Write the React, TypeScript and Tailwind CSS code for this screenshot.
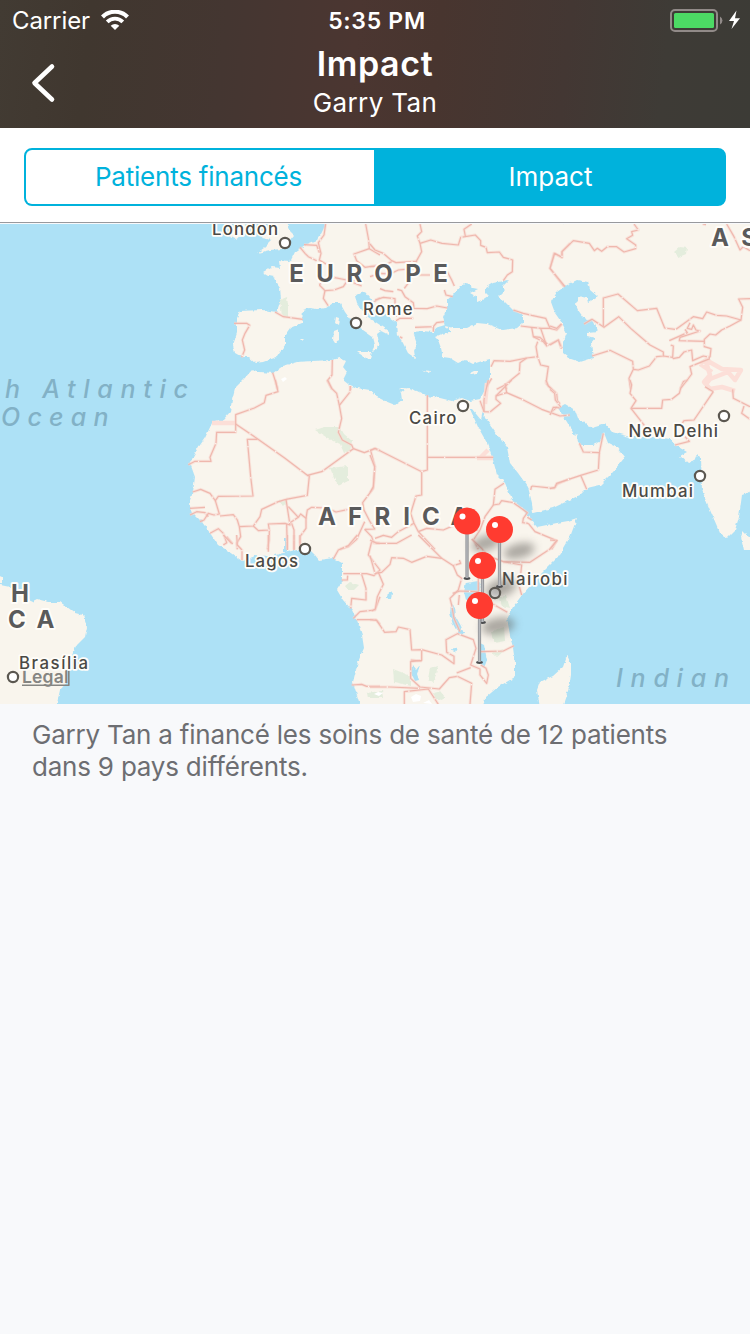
import React from "react";

const LAND =
  "M327 222 L323 230 L320 236 L317 240 L305 245 L295 252 L291 260 L288 262 L279 261 L280 268 L272 267 L263 272 L268 275 L273 276 L275 280 L280 287 L281 300 L277 312 L262 310 L240 311 L237 317 L237 333 L233 345 L235 353 L242 357 L248 357 L255 363 L263 362 L277 357 L285 345 L285 335 L290 328 L302 323 L303 310 L309 308 L317 309 L326 308 L333 303 L340 303 L345 312 L353 323 L363 330 L373 337 L375 345 L372 351 L376 350 L379 344 L377 334 L381 331 L389 335 L389 331 L380 325 L368 317 L362 310 L357 303 L355 295 L365 292 L370 298 L380 310 L390 318 L397 323 L398 335 L403 343 L408 353 L415 358 L414 350 L417 343 L413 332 L422 331 L433 332 L435 328 L445 325 L446 332 L435 337 L438 340 L441 348 L443 357 L450 358 L458 363 L465 360 L473 364 L482 361 L490 359 L490 377 L486 388 L480 399 L470 401 L462 398 L452 401 L440 398 L427 396 L417 391 L408 388 L401 393 L402 400 L395 405 L385 401 L375 396 L370 390 L357 388 L348 384 L343 380 L347 372 L343 367 L346 361 L340 358 L332 360 L313 361 L297 362 L283 366 L273 373 L260 372 L252 370 L243 380 L235 388 L232 400 L230 412 L223 420 L212 423 L205 438 L198 448 L190 463 L195 477 L193 492 L189 503 L193 513 L202 522 L210 533 L218 545 L225 549 L242 561 L254 556 L268 557 L283 553 L297 550 L310 550 L315 555 L319 560 L333 558 L342 563 L342 582 L337 590 L343 600 L352 610 L357 620 L362 635 L364 648 L358 662 L353 682 L357 695 L361 708 L483 708 L485 698 L498 687 L515 677 L515 662 L513 648 L510 635 L507 618 L513 607 L522 595 L537 578 L557 558 L563 549 L570 537 L577 518 L568 521 L557 523 L537 527 L530 519 L522 508 L512 500 L505 483 L497 475 L493 460 L487 443 L478 427 L470 409 L472 409 L481 420 L483 410 L485 418 L497 435 L507 447 L510 463 L518 473 L528 487 L532 503 L533 513 L553 508 L580 495 L587 488 L600 485 L613 472 L625 457 L618 448 L608 443 L604 433 L600 442 L593 445 L581 445 L578 443 L577 434 L575 436 L567 422 L558 408 L565 404 L575 410 L578 418 L592 428 L605 424 L612 432 L630 437 L653 437 L670 439 L675 445 L687 452 L680 456 L688 463 L694 461 L697 454 L701 458 L702 490 L710 510 L720 533 L727 538 L735 530 L739 517 L742 495 L755 490 L755 218 Z";

const ISLANDS = [
  "M257 253 L264 248 L272 240 L262 238 L266 231 L274 222 L286 222 L289 230 L294 235 L289 241 L290 245 L282 249 L270 250 Z",
  "M230 237 L236 240 L243 235 L246 222 L238 222 Z",
  "M336 317 L339 318 L338 325 L335 323 Z M334 331 L339 329 L339 340 L335 343 L333 340 Z",
  "M357 352 L372 352 L370 359 L366 358 Z",
  "M300 339 L304 339 L302 341 Z M422 370 L431 371 L430 373 Z",
  "M470 373 L474 371 L479 371 L476 374 L472 375 Z",
  "M398 388 L404 388 L411 389 L406 391 Z",
  "M567 655 L571 664 L571 675 L569 688 L562 708 L540 708 L537 690 L540 682 L553 676 L563 667 Z",
  "M741 537 L743 531 L748 536 L752 542 L752 550 L744 550 Z",
  "M-5 584 L10 587 L27 595 L31 602 L37 599 L48 602 L60 602 L67 607 L75 613 L83 615 L87 627 L85 637 L77 645 L72 655 L68 670 L68 681 L60 690 L56 708 L-5 708 Z",
  "M-5 574 L2 577 L2 583 L-5 584 Z",
];

const SEAS = [
  "M467 283 L473 288 L478 289 L470 293 L477 297 L477 302 L482 300 L488 296 L485 293 L485 288 L493 283 L503 281 L509 280 L502 287 L505 290 L498 297 L503 300 L513 310 L523 315 L523 323 L517 328 L503 330 L487 324 L477 323 L467 328 L453 328 L445 326 L443 317 L447 308 L447 300 L453 295 L460 286 Z",
  "M438 330 L448 328 L452 332 L442 335 Z",
  "M577 280 L588 282 L590 290 L598 297 L588 303 L587 298 L578 296 L578 302 L575 303 L578 310 L583 317 L588 320 L593 319 L598 332 L587 333 L587 336 L595 338 L591 343 L593 358 L580 362 L571 359 L563 353 L563 343 L567 333 L562 323 L555 313 L551 302 L557 292 L567 285 Z",
  "M466 583 L478 581 L481 588 L478 598 L466 600 L464 592 Z",
  "M451 603 L455 607 L456 617 L461 626 L464 634 L459 635 L453 624 L450 613 Z",
  "M478 642 L484 645 L487 660 L484 668 L480 662 Z",
  "M412 665 L416 670 L420 665 L417 674 L419 680 L415 681 L411 673 Z M454 647 L457 648 L455 652 L452 651 Z M388 592 L392 593 L391 599 L387 598 Z",
  "M562 223 L568 223 L565 225 Z M284 538 L287 538 L287 552 L284 552 Z",
];

const PARKS = [
  "M674 252 L680 247 L687 248 L686 254 L679 257 Z",
  "M315 430 L325 427 L340 427 L344 434 L352 441 L350 452 L344 453 L340 444 L326 437 Z",
  "M330 468 L348 466 L348 481 L338 486 Z",
  "M277 502 L286 499 L287 505 L280 504 Z",
  "M345 586 L350 582 L359 585 L354 590 L348 590 Z",
  "M498 597 L506 596 L510 608 L502 606 Z",
  "M491 632 L504 627 L505 641 L494 643 Z M492 652 L505 650 L497 657 Z",
  "M430 668 L438 665 L436 675 L433 682 L428 679 Z",
  "M393 669 L411 676 L411 686 L394 682 Z",
  "M433 693 L440 691 L445 697 L438 701 Z M367 693 L382 691 L383 698 L368 698 Z",
  "M280 300 L287 297 L288 307 L288 318 L282 316 Z",
];

interface BorderSet {
  x: number;
  y: number;
  lines: string[];
}

const BORDERS: BorderSet[] = [
  {
    x: 180,
    y: 220,
    lines: [
      "285 276 310 290 368 298",
      "162 310 200 310 209 316 195 340 187 360 194 390 185 412",
      "437 12 432 45 415 68 423 100 418 120 438 132",
      "360 82 375 100 385 110 410 122",
      "372 74 410 76 418 98",
      "557 12 566 60 568 86 600 105",
      "568 86 522 102 530 122 555 142 600 135",
      "418 195 430 180 460 172 500 180 545 198",
      "418 195 435 212 462 210 490 200 498 188 530 180",
      "435 212 430 235 445 258",
      "583 245 600 233",
      "457 420 456 465 442 482 456 508",
      "278 458 285 480 293 508",
      "511 498 512 510",
    ],
  },
  {
    x: 370,
    y: 220,
    lines: [
      "150 12 155 35 142 48 150 70 155 95 140 122 138 132",
      "150 70 182 60 216 70 265 75 272 52 316 45 332 62 332 76 348 82 352 98 388 96 400 112 428 120 427 155 412 165 400 182",
      "305 12 282 28 286 48",
      "0 72 15 90 40 100 65 122 78 128 138 124",
      "0 140 40 138 65 125",
      "60 162 85 150 135 145",
      "103 205 118 185 128 165 180 165",
      "82 208 95 212 105 230 130 248 132 265 172 266 200 258 232 264",
      "0 170 30 160 60 162",
      "232 155 245 180 253 198",
      "223 210 228 225 248 230",
      "135 322 190 320 200 308 222 305",
      "190 320 190 335",
      "78 302 90 295 130 295",
      "15 240 40 232 75 236 75 250 80 290",
      "30 206 45 212 70 215",
      "90 350 97 355",
      "430 270 460 280 485 286 527 295 540 325",
      "452 318 485 322 515 325 540 325 560 330 576 312",
      "485 322 490 350 520 365 530 378 512 325",
      "490 350 510 352 535 375 565 360 576 385",
      "503 365 498 380 503 410 512 435 535 440 528 490 545 508",
      "363 440 372 422 420 424 470 414 503 410",
      "470 414 450 428 448 460 405 495 380 508",
      "405 495 410 508",
      "582 200 540 145 552 100 576 112 576 95 600 70",
      "365 475 350 500",
    ],
  },
  {
    x: 550,
    y: 220,
    lines: [
      "45 200 0 145 14 100 36 112 36 95 70 62 118 70 133 92 142 85 155 94 172 80 200 80 222 96 257 86 257 75 230 56 248 46 245 35 265 30 252 12",
      "160 318 160 234 204 222 262 272 320 265 344 324 375 328",
      "102 312 126 298 162 322 206 290 242 325 300 375 340 396 340 408 320 410 298 438 265 450 250 448",
      "126 408 180 391 248 424 250 448 237 475 242 508",
      "378 328 430 290 458 296 470 276 500 286 530 288 573 300 578 262 566 237 600 236",
      "573 300 540 318 515 330 497 345 480 342 463 358 463 380 483 386 480 412",
      "463 364 388 362 390 352 450 333 438 330 430 315 425 328 412 325 420 308",
      "358 362 380 352 412 338 405 328",
      "362 375 370 378 368 412 340 408",
      "368 416 388 412 402 396 425 390 428 422 460 408 480 412",
      "480 416 420 440 425 462 412 480 400 485 390 508",
      "530 12 552 50 570 90 580 80 600 92",
      "0 318 20 325 34 312",
      "0 375 25 360 34 386",
      "458 12 468 14",
    ],
  },
  {
    x: 180,
    y: 380,
    lines: [
      "286 0 294 35 258 46 253 68 223 84 167 104 167 157 110 157 108 190 90 232 93 244 45 244 25 254",
      "167 132 232 176 315 235 382 286 388 288 382 346 318 358",
      "232 178 202 178 212 290 219 348 115 349 106 362 90 340 62 328 38 336",
      "382 286 425 275 520 206 515 195 487 180 475 157 485 115 478 76 470 40 455 25 443 0",
      "478 76 510 36 511 18",
      "520 206 553 218 585 206 600 212",
      "572 212 585 260 580 325 548 368 552 390 570 425 584 447 554 448",
      "106 362 118 402 102 405 85 400 72 420 60 425",
      "30 385 75 382 M30 405 50 395 75 398 85 410",
      "120 408 160 404 172 420 178 440 182 470 170 490 172 508",
      "178 440 220 438 240 410 245 388 295 365 318 358",
      "220 438 235 452 268 450 265 432 315 430 330 435 318 358",
      "268 450 268 480 262 508",
      "320 432 322 508 M335 430 342 450 342 508 M360 508 360 470 378 445 378 415 362 402 355 412 330 428",
      "325 380 355 412",
      "378 415 382 390 395 382 440 384 468 396 520 385 552 390",
      "90 460 115 446 130 460 140 488 130 495 M140 470 158 492",
      "554 448 575 470 582 490 600 490",
      "554 425 530 478 505 500 480 508",
    ],
  },
  {
    x: 370,
    y: 380,
    lines: [
      "172 46 172 270 155 275 155 345 138 348 122 400 132 430",
      "172 232 370 232",
      "155 275 15 205 0 212",
      "0 225 14 260 10 320 0 338",
      "132 430 85 455 65 472 40 466 15 475",
      "132 430 145 455 195 508",
      "145 455 170 445 220 450 265 430 300 450 325 450",
      "402 310 375 328 370 375 388 372 395 362 430 368 472 398 460 415 458 428 475 430",
      "370 375 345 410 330 450 310 480 325 508",
      "472 412 485 420",
      "485 318 482 330 M485 318 552 325 562 312 600 296",
      "475 430 495 455 560 482 545 508",
      "330 62 342 95 360 96 392 70 378 58 378 48 410 38 405 10",
      "355 0 348 30 342 60 342 95",
      "378 48 425 0 M410 38 450 55 515 88 542 98 560 82 570 84",
      "542 98 570 108 600 105",
      "528 0 535 18 560 40 562 62 570 72",
    ],
  },
  {
    x: 550,
    y: 380,
    lines: [
      "0 28 14 40 16 60 33 82 M0 105 10 82 22 82",
      "88 190 100 216 148 218 160 160",
      "148 218 145 270 92 286 20 310 15 322 0 326 M92 286 110 328",
      "240 0 245 15 240 40 258 62 243 85 335 85 338 60 365 58 388 40 392 25 412 0",
      "243 85 283 136",
      "490 35 432 120 402 122 390 140",
      "375 195 418 184 405 170",
      "490 35 465 20 M548 28 550 55 600 80 M582 78 575 100 600 118",
      "0 480 20 482 0 508",
    ],
  },
  {
    x: 180,
    y: 535,
    lines: [
      "460 72 475 45 505 32 532 0",
      "490 116 560 116 582 122 600 105 565 60 575 20 600 25",
      "545 118 558 160 558 195 515 190 512 220",
      "485 135 502 135 503 122",
      "520 250 540 230 585 225 600 185",
      "530 254 588 254 600 268",
      "515 450 545 448 560 454 600 454",
      "265 0 265 50 M170 0 172 30 186 45 186 76 M130 0 155 25 M322 0 322 45 M342 0 342 45 M360 0 360 25",
    ],
  },
  {
    x: 370,
    y: 535,
    lines: [
      "0 62 15 115 35 112 60 88 65 68 100 70 125 82 170 64 215 70 250 92 272 85 268 75",
      "25 112 40 148 22 185 16 222 5 228",
      "0 254 20 256 44 292 78 290 85 276 120 284 125 345 155 344 155 376 122 380 122 430 150 456 208 462 238 428 262 424",
      "155 344 215 360 252 386 252 364 230 352 228 314 262 296 310 314 318 340 302 390 330 402 330 420 350 445 355 420 348 400 332 390",
      "302 398 260 414 M262 424 305 445 300 508",
      "122 375 155 378",
      "0 456 60 456 150 460 M103 508 103 470 175 462 205 508",
      "330 350 400 348 432 332",
      "250 92 262 120 275 130 265 165 240 190 245 210 252 250 270 290",
      "248 175 270 168 325 170 330 185 412 232",
      "325 170 325 120 M268 180 265 210",
      "305 12 335 40 352 62 400 80 455 90 448 155 455 180",
      "400 80 480 82 540 42 562 15",
      "0 15 20 25 80 25 125 0 M145 0 195 50 215 70",
    ],
  },
];

// A line list may hold several runs separated by "M".
const toPath = (line: string) => "M" + line;

const HIGHLIGHTS = [
  "M212 423 L235 423",
  "M477 458 L493 458 M480 458 L488 450",
  "M487 383 L485 404",
  "M700 364 L706 360 L722 369 L741 370 L735 380 L728 372 M706 362 L710 375 L704 382 L710 389 L722 387 L735 391 M700 364 L712 372 M728 372 L710 379 L706 384",
];

interface Label {
  text: string;
  x: number;
  y: number;
  w: number;
}

const CITIES: Label[] = [
  { text: "London", x: 212, y: 235, w: 66 },
  { text: "Rome", x: 363, y: 315, w: 49.5 },
  { text: "Cairo", x: 409, y: 424, w: 47.5 },
  { text: "New Delhi", x: 628.5, y: 437, w: 89.5 },
  { text: "Mumbai", x: 622, y: 497, w: 71 },
  { text: "Lagos", x: 245, y: 566.5, w: 53 },
  { text: "Nairobi", x: 502, y: 585, w: 65.5 },
  { text: "Brasília", x: 19, y: 669, w: 69 },
];

const DOTS: [number, number][] = [
  [285, 243],
  [356, 323],
  [463, 406],
  [724, 416],
  [700, 476],
  [305, 549],
  [13, 677],
  [495, 593],
];

const REGIONS: [string, number, number][] = [
  ["E", 296.5, 281.5], ["U", 325, 281.5], ["R", 354.5, 281.5], ["O", 383.5, 281.5], ["P", 413, 281.5], ["E", 440.5, 281.5],
  ["A", 327, 524.5], ["F", 355, 524.5], ["R", 382.5, 524.5], ["I", 406.5, 524.5], ["C", 431, 524.5], ["A", 459.5, 524.5],
  ["A", 720, 245.5], ["S", 749, 245.5],
  ["H", 20, 602], ["C", 17, 628], ["A", 45.5, 628],
];

const PINS: [number, number, number][] = [
  [467, 521, 578],
  [499.5, 529.5, 586],
  [482.5, 565.5, 622],
  [479.5, 605.5, 662],
];

function WorldMap() {
  return (
    <svg viewBox="0 224 750 480" className="block h-[480px] w-full bg-[#ade1f6] font-['Inter',sans-serif]">
      <defs>
        <filter id="rough" x="0" y="0" width="100%" height="100%">
          <feTurbulence type="fractalNoise" baseFrequency="0.22" numOctaves="2" seed="4" result="n" />
          <feDisplacementMap in="SourceGraphic" in2="n" scale="3.5" xChannelSelector="R" yChannelSelector="G" />
        </filter>
        <filter id="soft" x="-60%" y="-60%" width="220%" height="220%">
          <feGaussianBlur stdDeviation="4" />
        </filter>
        <linearGradient id="stem" x1="0" x2="1" y1="0" y2="0">
          <stop offset="0" stopColor="#8d8f93" />
          <stop offset="0.5" stopColor="#b9bbbf" />
          <stop offset="1" stopColor="#85878a" />
        </linearGradient>
      </defs>

      <g filter="url(#rough)">
        <path d={LAND} fill="#f9f5ed" />
        {ISLANDS.map((d) => <path key={d} d={d} fill="#f9f5ed" />)}
        {PARKS.map((d) => <path key={d} d={d} fill="#deebd8" opacity="0.8" />)}
        {SEAS.map((d) => <path key={d} d={d} fill="#ade1f6" />)}
      </g>
      <path d="M374 694 l4 -2 5 1 -4 3z M411 697 l5 -3 5 2 -1 5 -7 1z M423 703 l6 -3 3 4z M281 379 l4 -2 2 2 -4 3z" fill="#fff" />

      {HIGHLIGHTS.map((d) => (
        <path key={d} d={d} fill="none" stroke="#fcdfd8" strokeWidth="4.5" strokeLinejoin="round" />
      ))}
      {BORDERS.map((set, i) => (
        <g key={i} transform={`translate(${set.x} ${set.y}) scale(0.33333)`} fill="none" strokeLinejoin="round">
          {set.lines.map((l) => (
            <path key={l + "halo"} d={toPath(l)} stroke="#f9d9d0" strokeOpacity="0.6" strokeWidth="9" />
          ))}
          {set.lines.map((l) => (
            <path key={l} d={toPath(l)} stroke="#efb8ae" strokeWidth="3.6" />
          ))}
          {set.lines.map((l) => (
            <path key={l + "gap"} d={toPath(l)} stroke="#fdf3ee" strokeWidth="4" strokeDasharray="4 90" strokeDashoffset="-50" />
          ))}
        </g>
      ))}

      <g fill="#82b1c6" fontSize="25" fontStyle="italic" fontWeight="500">
        <text x="5" y="398" textLength="183">h Atlantic</text>
        <text x="1" y="426" textLength="107.5">Ocean</text>
        <text x="616" y="687" textLength="113">Indian</text>
      </g>

      <g stroke="#fffdf9" strokeWidth="4" strokeLinejoin="round" paintOrder="stroke" fill="#5a5a5b" fontSize="24" fontWeight="650" textAnchor="middle">
        {REGIONS.map(([t, x, y]) => <text key={`${t}${x}`} x={x} y={y}>{t}</text>)}
      </g>

      <text x="22" y="683" textLength="46.5" fontSize="17.5" fontWeight="600" fill="#858582">Legal</text>
      <path d="M22 685.2 H69.5 M68.8 669 V685" stroke="#858582" strokeWidth="1.6" />

      <g stroke="#fffdf9" strokeWidth="3.6" strokeLinejoin="round" paintOrder="stroke" fill="#4a4945" fontSize="16.8" fontWeight="550">
        {CITIES.map((c) => <text key={c.text} x={c.x} y={c.y} textLength={c.w}>{c.text}</text>)}
      </g>
      {DOTS.map(([x, y]) => (
        <circle key={x} cx={x} cy={y} r="5.1" fill="#fff" stroke="#5b5750" strokeWidth="2.2" />
      ))}

      <g filter="url(#soft)" fill="#5f5c56" opacity="0.5">
        <ellipse cx="486" cy="543" rx="15" ry="7.5" transform="rotate(-18 486 543)" />
        <ellipse cx="519" cy="551" rx="16" ry="7.5" transform="rotate(-14 519 551)" />
        <ellipse cx="501" cy="588" rx="16" ry="9" transform="rotate(-18 501 588)" />
        <ellipse cx="498" cy="626" rx="17" ry="8.5" transform="rotate(-10 498 626)" />
      </g>

      {PINS.map(([x, y, foot]) => (
        <g key={x}>
          <ellipse cx={x} cy={foot + 0.5} rx="3.4" ry="1.4" fill="#4c4d4f" />
          <rect x={x - 1.6} y={y + 10} width="3.2" height={foot - y - 10} fill="url(#stem)" />
          <circle cx={x} cy={y} r="13.5" fill="#ff3b30" />
          <circle cx={x - 4.5} cy={y - 4.5} r="3" fill="#fff" />
        </g>
      ))}
    </svg>
  );
}

function StatusBar() {
  return (
    <div className="grid h-10 grid-cols-3 items-center pr-2.5 pl-3">
      <div className="flex h-10 items-center gap-[11px]">
        <span className="text-[24px] leading-[41px] tracking-[-0.1px]">Carrier</span>
        <svg width="28" height="20" viewBox="0 0 28 20" className="block">
          <g fill="none" stroke="#fff" strokeWidth="4.2">
            <path d="M1.5 6.9 A17.8 17.8 0 0 1 26.5 6.9" />
            <path d="M6.2 11.9 A11 11 0 0 1 21.8 11.9" strokeWidth="3.8" />
          </g>
          <path d="M14 20 L9.7 15.7 A6.2 6.2 0 0 1 18.3 15.7 Z" fill="#fff" />
        </svg>
      </div>
      <div className="h-10 pl-0.5 text-center text-[23px] leading-[42px] font-semibold tracking-[0.7px]">5:35 PM</div>
      <div className="flex h-10 items-center justify-end">
        <svg width="70" height="24" viewBox="0 0 70 24" className="block">
          <rect x="1" y="2" width="46" height="21" rx="4" fill="none" stroke="#918a88" strokeWidth="2" />
          <rect x="4" y="5" width="40" height="15" rx="1.5" fill="#4cd964" />
          <path d="M50 8.5 a4.5 4.5 0 0 1 0 8z" fill="#918a88" />
          <path d="M66.5 2.5 L59 13.1 H64 L61.5 21 L70 10.3 H65 Z" fill="#fff" />
        </svg>
      </div>
    </div>
  );
}

export default function App() {
  return (
    <div className="flex h-[1334px] w-[750px] flex-col overflow-hidden bg-[#f8f9fb] font-['Inter',sans-serif]">
      <header className="h-32 bg-[linear-gradient(96deg,#423b33_0%,#40372f_12%,#443631_30%,#4b3631_47%,#48352f_58%,#433733_75%,#3e3b36_88%,#3c3b36_100%)] text-white">
        <StatusBar />
        <div className="grid h-[88px] grid-cols-[100px_1fr_100px]">
          <svg width="26" height="40" viewBox="0 0 26 40" className="mt-[23px] ml-[30px]">
            <path d="M22 3.5 L4.5 20 L22 36.5" fill="none" stroke="#fff" strokeWidth="4.6" strokeLinecap="round" strokeLinejoin="round" />
          </svg>
          <div className="flex flex-col items-center pt-1">
            <h1 className="text-[34px] leading-10 font-semibold tracking-[0.6px]">Impact</h1>
            <p className="pt-px text-[26px] leading-9 tracking-[0.35px]">Garry Tan</p>
          </div>
        </div>
      </header>

      <div className="mb-px h-[95px] border-b border-[#98999d] bg-white px-6 pt-5">
        <div className="grid h-[58px] grid-cols-2 rounded-lg border-2 border-[#00b2dc] bg-[#00b2dc] text-[26px] leading-[54px]">
          <button className="mr-px h-[54px] rounded-l-md bg-white pr-[3px] text-center tracking-[-0.22px] text-[#00b2dc]">Patients financés</button>
          <button className="h-[54px] pl-0.5 text-center text-white">Impact</button>
        </div>
      </div>

      <WorldMap />

      <p className="px-8 pt-[15px] text-[26px] leading-8 tracking-[-0.21px] text-[#6d6e72]">
        Garry Tan a financé les soins de santé de 12 patients
        <br />
        dans 9 pays différents.
      </p>
    </div>
  );
}
